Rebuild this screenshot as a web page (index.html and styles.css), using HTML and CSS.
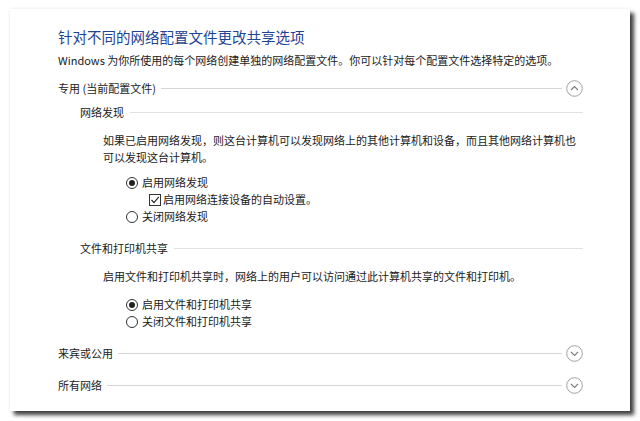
FILE: index.html
```html
<!DOCTYPE html>
<html lang="zh-CN">
<head>
    <meta charset="UTF-8">
    <title>高级共享设置</title>
    <link rel="stylesheet" href="styles.css">
</head>
<body>
    <div class="panel">
        <div class="title">针对不同的网络配置文件更改共享选项</div>
        <div class="desc">Windows 为你所使用的每个网络创建单独的网络配置文件。你可以针对每个配置文件选择特定的选项。</div>

        <div class="section-head head-private">
            <span>专用 (当前配置文件)</span>
            <span class="rule"></span>
            <svg class="toggle" width="17" height="17" viewBox="0 0 17 17">
                <circle cx="8.5" cy="8.5" r="7.8" fill="none" stroke="#a0a0a0" stroke-width="1"/>
                <path d="M5 10 L8.5 6.5 L12 10" fill="none" stroke="#7a7a7a" stroke-width="1.1"/>
            </svg>
        </div>

        <div class="sub-head">
            <span>网络发现</span>
            <span class="rule light"></span>
        </div>
        <div class="para">如果已启用网络发现，则这台计算机可以发现网络上的其他计算机和设备，而且其他网络计算机也<br>可以发现这台计算机。</div>
        <div class="options">
            <div class="opt"><span class="radio checked"></span>启用网络发现</div>
            <div class="opt sub-opt">
                <svg class="check" width="12" height="12" viewBox="0 0 12 12">
                    <rect x="0.5" y="0.5" width="11" height="11" fill="#fff" stroke="#333"/>
                    <path d="M2.5 6 L5 8.6 L9.8 2.8" fill="none" stroke="#222" stroke-width="1.1"/>
                </svg>启用网络连接设备的自动设置。
            </div>
            <div class="opt"><span class="radio"></span>关闭网络发现</div>
        </div>

        <div class="sub-head head-files">
            <span>文件和打印机共享</span>
            <span class="rule light"></span>
        </div>
        <div class="para">启用文件和打印机共享时，网络上的用户可以访问通过此计算机共享的文件和打印机。</div>
        <div class="options options-files">
            <div class="opt"><span class="radio checked"></span>启用文件和打印机共享</div>
            <div class="opt"><span class="radio"></span>关闭文件和打印机共享</div>
        </div>

        <div class="section-head head-guest">
            <span>来宾或公用</span>
            <span class="rule"></span>
            <svg class="toggle" width="17" height="17" viewBox="0 0 17 17">
                <circle cx="8.5" cy="8.5" r="7.8" fill="none" stroke="#a0a0a0" stroke-width="1"/>
                <path d="M5 7 L8.5 10.5 L12 7" fill="none" stroke="#7a7a7a" stroke-width="1.1"/>
            </svg>
        </div>

        <div class="section-head head-all">
            <span>所有网络</span>
            <span class="rule"></span>
            <svg class="toggle" width="17" height="17" viewBox="0 0 17 17">
                <circle cx="8.5" cy="8.5" r="7.8" fill="none" stroke="#a0a0a0" stroke-width="1"/>
                <path d="M5 7 L8.5 10.5 L12 7" fill="none" stroke="#7a7a7a" stroke-width="1.1"/>
            </svg>
        </div>
    </div>
</body>
</html>
```

FILE: styles.css
```css
html {
    background: #fff;
}

body {
    margin: 0;
    padding: 9px 0 10px 10px;
    font-family: "Noto Sans CJK SC", "Noto Sans", sans-serif;
    font-size: 11px;
    color: #1a1a1a;
}

.panel {
    width: 620px;
    height: 402px;
    box-sizing: border-box;
    padding: 18px 47px 0 48px;
    background: #fff;
    box-shadow: 4px 4px 4px rgba(0, 0, 0, 0.75), 0 0 3px rgba(0, 0, 0, 0.1);
}

.title {
    font-size: 14.5px;
    line-height: 20px;
    height: 20px;
    color: #1e4494;
}

.desc {
    margin-top: 5px;
    line-height: 16px;
    white-space: nowrap;
}

.section-head,
.sub-head {
    display: flex;
    align-items: center;
    height: 20px;
    line-height: 20px;
}

.head-private {
    margin-top: 10px;
}

.head-guest {
    margin-top: 13px;
}

.head-all {
    margin-top: 12px;
}

.sub-head {
    margin-top: 4px;
    padding-left: 22px;
}

.head-files {
    margin-top: 13px;
}

.rule {
    flex: 1;
    height: 1px;
    margin-left: 5px;
    background: #d6d6d6;
}

.rule.light {
    background: #e2e2e2;
    margin-left: 6px;
}

.toggle {
    margin-left: 4px;
    flex: none;
}

.para {
    margin-top: 10px;
    padding-left: 45px;
    line-height: 17px;
    white-space: nowrap;
}

.options {
    margin-top: 8px;
    padding-left: 68px;
}

.options-files {
    margin-top: 11px;
}

.opt {
    display: flex;
    align-items: center;
    height: 17px;
    line-height: 17px;
}

.sub-opt {
    padding-left: 23px;
}

.radio {
    width: 10px;
    height: 10px;
    margin-right: 4px;
    border: 1px solid #333;
    border-radius: 50%;
    background: #fff;
    position: relative;
    flex: none;
}

.radio.checked::after {
    content: '';
    position: absolute;
    left: 2px;
    top: 2px;
    width: 6px;
    height: 6px;
    border-radius: 50%;
    background: #222;
}

.check {
    margin-right: 2px;
    flex: none;
}
```
